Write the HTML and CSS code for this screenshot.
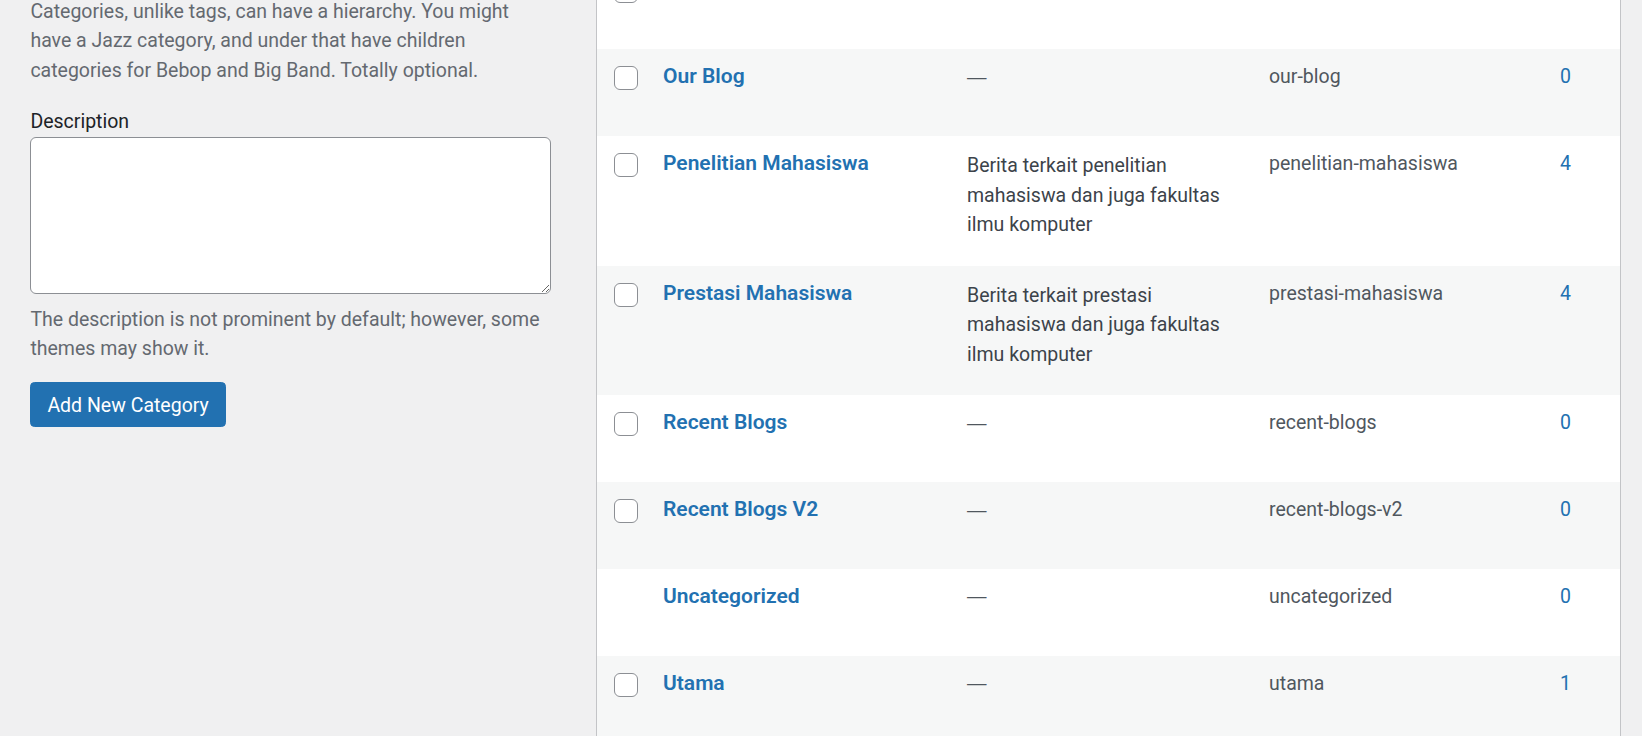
FILE: index.html
```html
<!DOCTYPE html>
<html lang="en">
<head>
<meta charset="utf-8">
<title>Categories</title>
<link rel="stylesheet" href="styles.css">
</head>
<body>
<div class="wrap">
  <div class="col-left">
    <p class="help first">Categories, unlike tags, can have a hierarchy. You might have a Jazz category, and under that have children categories for Bebop and Big Band. Totally optional.</p>
    <label class="field-label" for="tag-description">Description</label>
    <textarea id="tag-description" class="desc-input"></textarea>
    <p class="help second">The description is not prominent by default; however, some themes may show it.</p>
    <button class="button-primary" type="button">Add New Category</button>
  </div>
  <div class="col-right">
    <table class="terms">
      <colgroup>
        <col class="c-cb"><col class="c-name"><col class="c-desc"><col class="c-slug"><col class="c-posts">
      </colgroup>
      <tbody>
        <tr>
          <td class="cb"><span class="check"></span></td>
          <td class="name"><div class="title-space"></div><div class="row-actions"></div></td>
          <td class="desc"></td>
          <td class="slug"></td>
          <td class="posts"></td>
        </tr>
        <tr class="alt">
          <td class="cb"><span class="check"></span></td>
          <td class="name"><a class="row-title" href="#">Our Blog</a><div class="row-actions"></div></td>
          <td class="desc"><span class="dash">—</span></td>
          <td class="slug">our-blog</td>
          <td class="posts"><a href="#">0</a></td>
        </tr>
        <tr>
          <td class="cb"><span class="check"></span></td>
          <td class="name"><a class="row-title" href="#">Penelitian Mahasiswa</a><div class="row-actions"></div></td>
          <td class="desc text">Berita terkait penelitian mahasiswa dan juga fakultas ilmu komputer</td>
          <td class="slug">penelitian-mahasiswa</td>
          <td class="posts"><a href="#">4</a></td>
        </tr>
        <tr class="alt">
          <td class="cb"><span class="check"></span></td>
          <td class="name"><a class="row-title" href="#">Prestasi Mahasiswa</a><div class="row-actions"></div></td>
          <td class="desc text">Berita terkait prestasi mahasiswa dan juga fakultas ilmu komputer</td>
          <td class="slug">prestasi-mahasiswa</td>
          <td class="posts"><a href="#">4</a></td>
        </tr>
        <tr>
          <td class="cb"><span class="check"></span></td>
          <td class="name"><a class="row-title" href="#">Recent Blogs</a><div class="row-actions"></div></td>
          <td class="desc"><span class="dash">—</span></td>
          <td class="slug">recent-blogs</td>
          <td class="posts"><a href="#">0</a></td>
        </tr>
        <tr class="alt">
          <td class="cb"><span class="check"></span></td>
          <td class="name"><a class="row-title" href="#">Recent Blogs V2</a><div class="row-actions"></div></td>
          <td class="desc"><span class="dash">—</span></td>
          <td class="slug">recent-blogs-v2</td>
          <td class="posts"><a href="#">0</a></td>
        </tr>
        <tr>
          <td class="cb"></td>
          <td class="name"><a class="row-title" href="#">Uncategorized</a><div class="row-actions"></div></td>
          <td class="desc"><span class="dash">—</span></td>
          <td class="slug">uncategorized</td>
          <td class="posts"><a href="#">0</a></td>
        </tr>
        <tr class="alt">
          <td class="cb"><span class="check"></span></td>
          <td class="name"><a class="row-title" href="#">Utama</a><div class="row-actions"></div></td>
          <td class="desc"><span class="dash">—</span></td>
          <td class="slug">utama</td>
          <td class="posts"><a href="#">1</a></td>
        </tr>
      </tbody>
    </table>
  </div>
</div>
</body>
</html>
```
FILE: styles.css
```css
html, body {
  margin: 0;
  padding: 0;
  background: #f0f0f1;
  overflow: hidden;
}
body {
  font-family: Roboto, "Liberation Sans", sans-serif;
  font-size: 19.5px;
  line-height: 29.25px;
  color: #3c434a;
}
.wrap {
  display: flex;
  align-items: flex-start;
  margin-top: -37.75px;
}
.col-left {
  width: 596px;
  box-sizing: border-box;
  padding: 34.75px 0 0 30.4px;
  display: flex;
  flex-direction: column;
  align-items: flex-start;
}
.help {
  margin: 0;
  color: #646970;
  width: 522px;
}
.help.first {
  margin-bottom: 22.15px;
}
.field-label {
  display: block;
  color: #1d2327;
  margin-bottom: 0.5px;
}
.desc-input {
  display: block;
  width: 521px;
  height: 157.5px;
  box-sizing: border-box;
  margin: 0;
  border: 1px solid #8c8f94;
  border-radius: 6px;
  background: #fff;
  font: inherit;
  resize: vertical;
}
.help.second {
  margin-top: 11px;
}
.button-primary {
  margin-top: 18.4px;
  height: 44.5px;
  padding: 4px 16px 0;
  background: #2271b1;
  border: 1px solid #2271b1;
  border-radius: 4.5px;
  color: #fff;
  font-family: inherit;
  font-size: 19.5px;
  line-height: 36px;
  cursor: pointer;
}
.col-right {
  width: 1046px;
  box-sizing: border-box;
  padding-right: 21px;
}
.terms {
  width: 1025px;
  table-layout: fixed;
  border-collapse: separate;
  border-spacing: 0;
  background: #fff;
  border-left: 1px solid #c3c4c7;
  border-right: 1px solid #c3c4c7;
}
.c-cb { width: 51px; }
.c-name { width: 304px; }
.c-desc { width: 302px; }
.c-slug { width: 291px; }
.c-posts { width: 75px; }
.terms td {
  vertical-align: top;
  padding: 13px 15px 12px;
  color: #50575e;
}
.terms tr.alt td {
  background: #f6f7f7;
}
.terms td.cb {
  padding: 17px 0 0 17px;
}
.check {
  display: block;
  width: 24px;
  height: 24px;
  box-sizing: border-box;
  border: 1px solid #8c8f94;
  border-radius: 6px;
  background: #fff;
}
.row-title {
  display: block;
  font-size: 21px;
  font-weight: 600;
  color: #2271b1;
  text-decoration: none;
}
.title-space {
  height: 29.25px;
}
.row-actions {
  height: 32.5px;
}
.terms td.desc {
  padding-top: 15.5px;
  padding-bottom: 26.5px;
}
.terms td.desc.text {
  color: #3c434a;
}
.dash {
  font-family: "Liberation Sans", sans-serif;
  color: #50575e;
  position: relative;
  top: -2px;
}
.posts a {
  color: #2271b1;
  text-decoration: none;
}
```
